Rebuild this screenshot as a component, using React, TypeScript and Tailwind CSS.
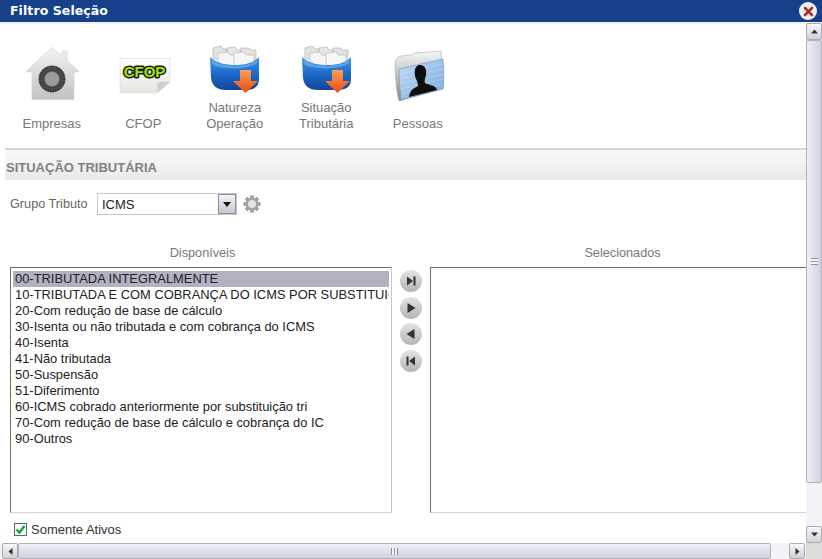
import React from "react";

const Folder = ({ id }: { id: string }) => (
  <svg width="50" height="48" viewBox="0 0 50 48" className="block">
    <defs>
      <linearGradient id={`b${id}`} x1="0" y1="0" x2="0" y2="1">
        <stop offset="0" stopColor="#3f9bea" />
        <stop offset="0.55" stopColor="#1a66c4" />
        <stop offset="1" stopColor="#12459a" />
      </linearGradient>
      <linearGradient id={`o${id}`} x1="0" y1="0" x2="0" y2="1">
        <stop offset="0" stopColor="#f9a05a" />
        <stop offset="1" stopColor="#ee4a0c" />
      </linearGradient>
    </defs>
    <path d="M3 3 L11 1 L13 4 L17 4 V14 H3Z" fill="#e2e2e2" stroke="#a8a8a8" strokeWidth="0.6" />
    <path d="M17 3 L25 2 L27 5 L31 5 V14 H17Z" fill="#e6e6e6" stroke="#a8a8a8" strokeWidth="0.6" />
    <path d="M31 3 L39 3 L41 5 L46 5 V16 H31Z" fill="#e2e2e2" stroke="#a8a8a8" strokeWidth="0.6" />
    <path d="M8 8 L18 7 L20 10 L26 10 V22 H8Z" fill="#f4f4f4" stroke="#b4b4b4" strokeWidth="0.6" />
    <path d="M24 8 L34 7 L36 10 L44 10 V22 H24Z" fill="#f6f6f6" stroke="#b4b4b4" strokeWidth="0.6" />
    <path d="M0 12 C7 19 18 20 25 20 C33 20 43 19 49 12 L49 34 C49 42 44 44 38 45 L16 45 C7 45 2 41 1 33 Z" fill={`url(#b${id})`} />
    <path d="M2 15 C9 22 40 23 47 15 L47 18 C37 25 11 25 2 19Z" fill="#7cc0f3" opacity="0.55" />
    <path d="M30 25 H41 V36 H48 L35.5 48 L23 36 H30Z" fill={`url(#o${id})`} />
  </svg>
);

const House = () => (
  <svg width="53" height="53" viewBox="0 0 53 53" className="block">
    <defs>
      <linearGradient id="h" x1="0" y1="0" x2="0" y2="1">
        <stop offset="0" stopColor="#f2f2f2" />
        <stop offset="1" stopColor="#c2c2c2" />
      </linearGradient>
      <radialGradient id="d">
        <stop offset="0" stopColor="#a8a8a8" />
        <stop offset="0.5" stopColor="#858585" />
        <stop offset="0.62" stopColor="#3e3e3e" />
        <stop offset="1" stopColor="#6a6a6a" />
      </radialGradient>
    </defs>
    <path d="M26 0.5 L36 9 V4 H41 V13.5 L52.5 24 V25 L48 25 V52.5 H6 V25 L0.5 25 V24Z" fill="url(#h)" stroke="#d2d2d2" strokeWidth="0.7" />
    <circle cx="26" cy="32" r="13.5" fill="url(#d)" />
    <circle cx="26" cy="32" r="12" fill="none" stroke="#2f2f2f" strokeWidth="2.4" strokeDasharray="1.3 1.1" />
    <circle cx="26" cy="32" r="7" fill="#9c9c9c" />
  </svg>
);

const Cfop = () => (
  <svg width="52" height="36" viewBox="0 0 52 36" className="block">
    <defs>
      <linearGradient id="p" x1="0" y1="0" x2="0" y2="1">
        <stop offset="0" stopColor="#ffffff" />
        <stop offset="1" stopColor="#e6e6e2" />
      </linearGradient>
    </defs>
    <path d="M1 0.5 H51 V24 L38 35 H1Z" fill="url(#p)" stroke="#e2e2e2" strokeWidth="0.8" />
    <path d="M51 24 C46 23 41 24 38 25 C39 29 39 32 38 35Z" fill="#cfcfcb" />
    <text
      x="25.5"
      y="18.5"
      textAnchor="middle"
      fontFamily="'Liberation Sans', sans-serif"
      fontWeight="700"
      fontSize="15"
      fill="#a2e21a"
      stroke="#141e05"
      strokeWidth="3"
      strokeLinejoin="round"
      style={{ paintOrder: "stroke" }}
    >
      CFOP
    </text>
  </svg>
);

const People = () => (
  <svg width="52" height="52" viewBox="0 0 52 52" className="block">
    <defs>
      <linearGradient id="f" x1="0" y1="0" x2="1" y2="1">
        <stop offset="0" stopColor="#c4dcf5" />
        <stop offset="1" stopColor="#7aa9dd" />
      </linearGradient>
      <linearGradient id="g" x1="0" y1="0" x2="0" y2="1">
        <stop offset="0" stopColor="#f6f6f6" />
        <stop offset="1" stopColor="#8a8a8a" />
      </linearGradient>
    </defs>
    <path d="M2 12 C3 8 6 6 8 6 L18 5 L22 3 L48 1 L50 38 L6 51 C3 40 2 24 2 12Z" fill="url(#g)" stroke="#a0a0a0" strokeWidth="0.5" />
    <path d="M6 19 L50 9 C51 20 51 32 50 39 L8 50 C7 40 6 30 6 19Z" fill="url(#f)" stroke="#6d8fb4" strokeWidth="0.6" />
    <path d="M7 24 L50 14 M7 29 L50 19 M7 34 L50 24 M8 39 L50 29 M8 44 L50 34" stroke="#ffffff" strokeWidth="0.6" opacity="0.35" />
    <path d="M26 15 C32 14 34 20 33 25 C32 29 31 31 32 33 C35 35 43 35 44 40 L16 47 C17 39 22 38 25 36 C25 33 24 31 23 29 C21 24 21 16 26 15Z" fill="#0e0e0e" />
  </svg>
);

const Tool = ({ lines, iconClass, children }: { lines: string[]; iconClass: string; children: React.ReactNode }) => (
  <div className="w-[91.5px] h-[97px] flex flex-col items-center shrink-0">
    <div className="h-[64px] w-full flex justify-center">
      <div className={iconClass}>{children}</div>
    </div>
    <div className="h-[33px] flex flex-col justify-end items-center text-[13px] leading-[16px] text-[#777]">
      {lines.map((l) => (
        <span key={l}>{l}</span>
      ))}
    </div>
  </div>
);

const Round = ({ d }: { d: string }) => (
  <div className="w-[22px] h-[22px] rounded-full bg-gradient-to-b from-[#e4e4e4] to-[#b4b4b4] flex items-center justify-center">
    <svg width="12" height="12" viewBox="0 0 12 12">
      <path d={d} fill="#333" />
    </svg>
  </div>
);

const Btn = ({ d, cls }: { d: string; cls: string }) => (
  <div className={`w-[16px] h-[17px] shrink-0 border border-[#a9a9b4] rounded-[2px] bg-gradient-to-b from-[#f8f8fa] to-[#cfd0da] flex items-center justify-center ${cls}`}>
    <svg width="9" height="9" viewBox="0 0 9 9">
      <path d={d} fill="#333" />
    </svg>
  </div>
);

const Gear = () => (
  <svg className="ml-[6px]" width="18" height="18" viewBox="0 0 18 18">
    {[0, 45, 90, 135, 180, 225, 270, 315].map((a) => (
      <rect key={a} x="7.2" y="0.5" width="3.6" height="4" fill="#9a9a9a" transform={`rotate(${a} 9 9)`} />
    ))}
    <circle cx="9" cy="9" r="6.6" fill="#a2a2a2" />
    <circle cx="9" cy="9" r="4" fill="#e4e4e4" />
  </svg>
);

const items = [
  "00-TRIBUTADA INTEGRALMENTE",
  "10-TRIBUTADA E COM COBRANÇA DO ICMS POR SUBSTITUIÇÃO TRIBUTÁRIA",
  "20-Com redução de base de cálculo",
  "30-Isenta ou não tributada e com cobrança do ICMS",
  "40-Isenta",
  "41-Não tributada",
  "50-Suspensão",
  "51-Diferimento",
  "60-ICMS cobrado anteriormente por substituição tri",
  "70-Com redução de base de cálculo e cobrança do IC",
  "90-Outros",
];

export default function App() {
  return (
    <div
      className="w-[822px] h-[559px] bg-white flex flex-col overflow-hidden"
      style={{ fontFamily: "'Liberation Sans', Arial, sans-serif" }}
    >
      <div className="h-[22px] shrink-0 bg-[#17408b] flex items-center justify-between pl-[10px] pr-[5px]">
        <span className="text-[12.5px] font-bold text-white tracking-[0.08px]" style={{ fontFamily: "'DejaVu Sans', sans-serif" }}>
          Filtro Seleção
        </span>
        <div className="w-[18px] h-[18px] rounded-full bg-[#f2f0ee] flex items-center justify-center">
          <svg width="11" height="11" viewBox="0 0 11 11">
            <path d="M2 2 L9 9 M9 2 L2 9" stroke="#a8322c" strokeWidth="2.6" strokeLinecap="round" />
          </svg>
        </div>
      </div>
      <div className="flex-1 flex min-h-0">
        <div className="w-[806px] shrink-0 flex flex-col overflow-hidden border-t-2 border-[#f0f0f0]">
          <div className="flex pl-[6px] pt-[11px] h-[124px] shrink-0">
            <Tool lines={["Empresas"]} iconClass="mt-[12px] ml-[2px]"><House /></Tool>
            <Tool lines={["CFOP"]} iconClass="mt-[23px] ml-[4px]"><Cfop /></Tool>
            <Tool lines={["Natureza", "Operação"]} iconClass="mt-[10px] ml-[1px]"><Folder id="a" /></Tool>
            <Tool lines={["Situação", "Tributária"]} iconClass="mt-[10px] ml-[1px]"><Folder id="c" /></Tool>
            <Tool lines={["Pessoas"]} iconClass="mt-[15px] ml-[3px]"><People /></Tool>
          </div>
          <div className="ml-[5px] h-[32px] shrink-0 border-t-2 border-[#d4d4d4] bg-gradient-to-b from-[#f9f9f9] to-[#e9e9e9] flex items-center pt-[5px]">
            <span className="text-[13px] font-bold text-[#808080] pl-px">SITUAÇÃO TRIBUTÁRIA</span>
          </div>
          <div className="flex items-center h-[22px] mt-[13px] pl-[10px] shrink-0">
            <span className="w-[87px] mt-px text-[12.7px] text-[#666]">Grupo Tributo</span>
            <div className="w-[140px] h-[22px] border border-[#c8c8c8] flex items-center justify-between">
              <span className="pl-[4px] mt-px text-[13px] text-[#222]">ICMS</span>
              <div className="w-[18px] h-[20px] border border-[#8b8b9c] bg-gradient-to-b from-[#f4f4f8] to-[#c5c7d8] flex items-center justify-center">
                <svg width="8" height="5" viewBox="0 0 8 5"><path d="M0 0 H8 L4 5Z" fill="#111" /></svg>
              </div>
            </div>
            <Gear />
          </div>
          <div className="flex pl-[10px] mt-[31px] h-[15px] shrink-0 text-[12.7px] leading-[15px] text-[#777]">
            <div className="w-[385px] shrink-0 text-center">Disponíveis</div>
            <div className="w-[35px] shrink-0" />
            <div className="w-[385px] shrink-0 text-center">Selecionados</div>
          </div>
          <div className="flex pl-[10px] mt-[6px] h-[246px] shrink-0">
            <div className="w-[382px] shrink-0 h-full border border-[#6f6f64] border-r-[#c8c8c8] border-b-[#d4d4d4] pt-[3px] pl-[2px] pr-[2px] overflow-hidden">
              {items.map((t, i) => (
                <div
                  key={t}
                  className={`h-[16px] leading-[16px] pl-[2px] text-[12.9px] text-[#222] whitespace-nowrap overflow-hidden ${i === 0 ? "bg-[#b1b1c1]" : ""}`}
                >
                  {t}
                </div>
              ))}
            </div>
            <div className="w-[38px] shrink-0 flex flex-col items-center gap-[4.5px] pt-[3px]">
              <Round d="M2 1.5 L8 6 L2 10.5Z M8.5 1.5 H10.5 V10.5 H8.5Z" />
              <Round d="M2.5 1 L10.5 6 L2.5 11Z" />
              <Round d="M9.5 1 L1.5 6 L9.5 11Z" />
              <Round d="M10 1.5 L4 6 L10 10.5Z M1.5 1.5 H3.5 V10.5 H1.5Z" />
            </div>
            <div className="w-[376px] shrink-0 h-full border-l border-t border-b border-l-[#6f6f64] border-t-[#6f6f64] border-b-[#d4d4d4]" />
          </div>
          <div className="flex items-center gap-[4px] pl-[14px] mt-[8px] h-[16px] shrink-0">
            <div className="w-[13px] h-[13px] border border-[#4a6a80] bg-[#f4fbf4] flex items-center justify-center">
              <svg width="11" height="11" viewBox="0 0 11 11">
                <path d="M1.5 5.5 L4.5 8.5 L9.5 2" fill="none" stroke="#1f9a3c" strokeWidth="2.4" />
              </svg>
            </div>
            <span className="mt-[2px] text-[13px] text-[#333]">Somente Ativos</span>
          </div>
        </div>
        <div className="w-[16px] shrink-0 bg-[#f3f3f7] flex flex-col pt-px">
          <Btn d="M4.5 2.5 L8 6.5 H1Z" cls="" />
          <div className="h-[443px] shrink-0 border border-[#b2b2bf] rounded-[2px] bg-gradient-to-r from-[#eff0f6] to-[#cfd1e0] flex items-center justify-center">
            <div className="w-[7px] h-[7px] border-y border-[#8f8f9c] bg-[linear-gradient(#f4f4f8_33%,#8f8f9c_33%,#8f8f9c_66%,#f4f4f8_66%)]" />
          </div>
          <div className="flex-1" />
          <Btn d="M1 2.5 H8 L4.5 6.5Z" cls="" />
        </div>
      </div>
      <div className="h-[16px] shrink-0 flex bg-[#f3f3f7]">
        <div className="w-[806px] shrink-0 flex pl-[2px]">
          <Btn d="M6.5 1 L2.5 4.5 L6.5 8Z" cls="!h-[16px]" />
          <div className="w-[753px] shrink-0 border border-[#b2b2bf] rounded-[2px] bg-gradient-to-b from-[#eff0f6] to-[#cfd1e0] flex items-center justify-center">
            <div className="w-[7px] h-[7px] border-x border-[#8f8f9c] bg-[linear-gradient(90deg,#f4f4f8_33%,#8f8f9c_33%,#8f8f9c_66%,#f4f4f8_66%)]" />
          </div>
          <div className="w-[18px] shrink-0" />
          <Btn d="M2.5 1 L6.5 4.5 L2.5 8Z" cls="!h-[16px]" />
        </div>
        <div className="flex-1 bg-[#dcdcdc]" />
      </div>
    </div>
  );
}
